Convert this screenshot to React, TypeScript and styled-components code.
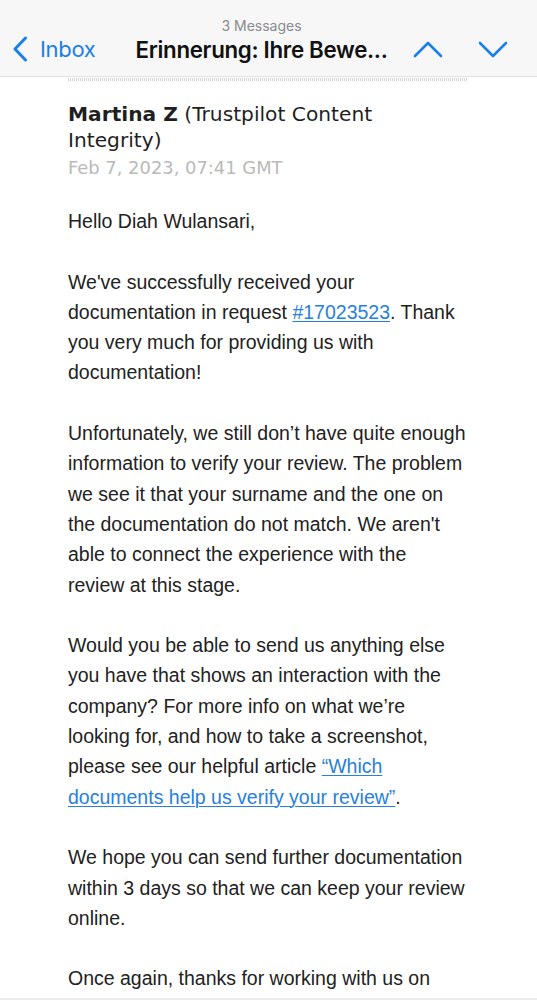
import styled, { createGlobalStyle } from 'styled-components';

const GlobalStyle = createGlobalStyle`
  html, body {
    margin: 0;
    padding: 0;
    background: #ffffff;
  }
  body {
    font-family: "Liberation Sans", Arial, sans-serif;
    -webkit-font-smoothing: antialiased;
  }
`;

const Page = styled.div`
  width: 537px;
  min-height: 1000px;
  background: #ffffff;
  overflow: hidden;
`;

const NavBar = styled.header`
  background: #f7f7f7;
  border-bottom: 1px solid #e2e2e2;
  height: 77px;
  box-sizing: border-box;
  padding-top: 17px;
`;

const Subtitle = styled.div`
  text-align: center;
  padding-right: 14px;
  font-family: Inter, "Liberation Sans", sans-serif;
  font-size: 14px;
  color: #8b8b8b;
  line-height: 18px;
`;

const NavRow = styled.div`
  display: grid;
  grid-template-columns: 124px 1fr 132px;
  align-items: center;
  height: 28px;
`;

const BackButton = styled.div`
  display: flex;
  align-items: center;
  gap: 12px;
  padding-left: 12px;
  color: #1b7fe8;
  font-family: Inter, "Liberation Sans", sans-serif;
  font-size: 22px;
  letter-spacing: -0.3px;
`;

const Title = styled.div`
  text-align: center;
  padding-right: 6px;
  font-family: Inter, "Liberation Sans", sans-serif;
  font-weight: 600;
  font-size: 22.3px;
  letter-spacing: -0.3px;
  color: #111;
  white-space: nowrap;
`;

const Arrows = styled.div`
  display: flex;
  align-items: center;
  gap: 35px;
  padding-left: 8px;
`;

const Content = styled.main`
  padding: 0 68px;
`;

const Divider = styled.div`
  height: 3px;
  margin-top: 1px;
  background-image: repeating-linear-gradient(
    to right,
    #d6d6d6 0 1px,
    transparent 1px 2px
  );
  width: 400px;
`;

const Sender = styled.div`
  margin-top: 20px;
  width: 392px;
  font-family: "DejaVu Sans", Verdana, sans-serif;
  font-size: 20.2px;
  line-height: 26px;
  color: #1f1f1f;
`;

const SenderName = styled.span`
  font-weight: 700;
`;

const DateLine = styled.div`
  font-family: "DejaVu Sans", Verdana, sans-serif;
  font-size: 17.9px;
  line-height: 30px;
  color: #b9b9b9;
`;

const Body = styled.div`
  margin-top: 23px;
  font-family: "Liberation Sans", Arial, sans-serif;
  font-size: 19.5px;
  line-height: 30.3px;
  color: #222;
`;

const Para = styled.p`
  margin: 0 0 30.3px 0;
`;

const Line = styled.span`
  display: block;
  white-space: nowrap;
`;

const Link = styled.a`
  color: #2680e0;
  text-decoration: underline;
  text-underline-offset: 2px;
  text-decoration-thickness: 1px;
`;

const BottomEdge = styled.div`
  position: fixed;
  left: 0;
  right: 0;
  top: 998px;
  height: 2px;
  background: #ececec;
`;

function Chevron({ dir }: { dir: 'left' | 'up' | 'down' }) {
  if (dir === 'left') {
    return (
      <svg width="16" height="26" viewBox="0 0 16 26">
        <path d="M13.5 2 L3 13 L13.5 24" fill="none" stroke="#1b7fe8" strokeWidth="3" strokeLinecap="round" strokeLinejoin="round" />
      </svg>
    );
  }
  const d = dir === 'up' ? 'M2 16 L15 3 L28 16' : 'M2 3 L15 16 L28 3';
  return (
    <svg width="30" height="19" viewBox="0 0 30 19">
      <path d={d} fill="none" stroke="#1b7fe8" strokeWidth="2.6" strokeLinecap="round" strokeLinejoin="round" />
    </svg>
  );
}

export default function App() {
  return (
    <Page>
      <GlobalStyle />
      <NavBar>
        <Subtitle>3 Messages</Subtitle>
        <NavRow>
          <BackButton>
            <Chevron dir="left" />
            Inbox
          </BackButton>
          <Title>Erinnerung: Ihre Bewe...</Title>
          <Arrows>
            <Chevron dir="up" />
            <Chevron dir="down" />
          </Arrows>
        </NavRow>
      </NavBar>
      <Content>
        <Divider />
        <Sender>
          <SenderName>Martina Z</SenderName> (Trustpilot Content Integrity)
        </Sender>
        <DateLine>Feb 7, 2023, 07:41 GMT</DateLine>
        <Body>
          <Para>Hello Diah Wulansari,</Para>
          <Para>
            <Line>We've successfully received your</Line>
            <Line>
              documentation in request <Link href="#">#17023523</Link>. Thank
            </Line>
            <Line>you very much for providing us with</Line>
            <Line>documentation!</Line>
          </Para>
          <Para>
            <Line>Unfortunately, we still don’t have quite enough</Line>
            <Line>information to verify your review. The problem</Line>
            <Line>we see it that your surname and the one on</Line>
            <Line>the documentation do not match. We aren't</Line>
            <Line>able to connect the experience with the</Line>
            <Line>review at this stage.</Line>
          </Para>
          <Para>
            <Line>Would you be able to send us anything else</Line>
            <Line>you have that shows an interaction with the</Line>
            <Line>company? For more info on what we’re</Line>
            <Line>looking for, and how to take a screenshot,</Line>
            <Line>
              please see our helpful article <Link href="#">“Which</Link>
            </Line>
            <Line>
              <Link href="#">documents help us verify your review”</Link>.
            </Line>
          </Para>
          <Para>
            <Line>We hope you can send further documentation</Line>
            <Line>within 3 days so that we can keep your review</Line>
            <Line>online.</Line>
          </Para>
          <Para>
            <Line>Once again, thanks for working with us on</Line>
            <Line>this.</Line>
          </Para>
        </Body>
      </Content>
      <BottomEdge />
    </Page>
  );
}
